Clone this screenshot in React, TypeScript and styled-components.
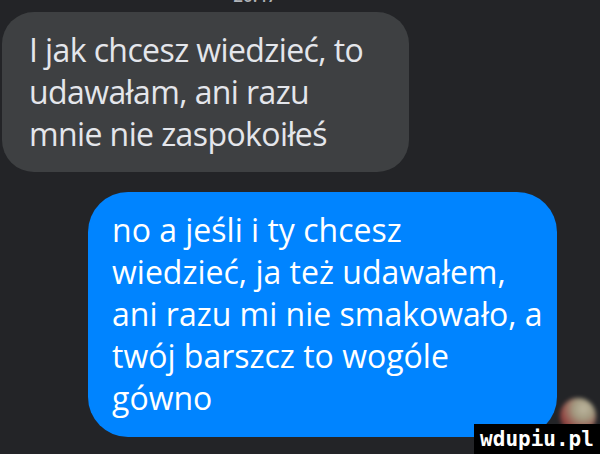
import React from "react";
import styled, { createGlobalStyle } from "styled-components";

const GlobalStyle = createGlobalStyle`
  html, body {
    margin: 0;
    padding: 0;
    background: #232427;
  }
`;

const Screen = styled("div")`
  position: relative;
  width: 600px;
  height: 454px;
  overflow: hidden;
  background: #232427;
  display: flex;
  flex-direction: column;
  font-family: "Open Sans", "Noto Sans", sans-serif;
`;

const Timestamp = styled("div")`
  height: 12px;
  display: flex;
  justify-content: center;
  align-items: flex-end;
  padding-right: 90px;
  color: #b0b3b8;
  font-size: 17px;
  line-height: 16px;
  font-weight: 600;

  span {
    transform: translateY(-8px);
  }
`;

const Bubble = styled("div")<{ $mine?: boolean }>`
  box-sizing: border-box;
  width: ${(p) => (p.$mine ? "469px" : "407px")};
  margin-left: ${(p) => (p.$mine ? "88px" : "2px")};
  margin-top: ${(p) => (p.$mine ? "20px" : "0")};
  padding: ${(p) => (p.$mine ? "17px 16px 18px 24px" : "17px 16px 17px 27px")};
  border-radius: ${(p) => (p.$mine ? "40px" : "32px")};
  background: ${(p) => (p.$mine ? "#0084ff" : "#3e4042")};
  color: ${(p) => (p.$mine ? "#ffffff" : "#e4e6eb")};
  font-size: 32px;
  line-height: 42px;
  letter-spacing: ${(p) => (p.$mine ? "0" : "-0.6px")};
`;

const Line = styled("div")`
  white-space: nowrap;
`;

const Avatar = styled("div")`
  position: absolute;
  left: 560px;
  top: 398px;
  width: 36px;
  height: 36px;
  border-radius: 50%;
  background: radial-gradient(
    circle at 65% 30%,
    #d8d0b4 0%,
    #b9ae90 30%,
    rgba(190, 80, 75, 0.85) 65%,
    #2e2a2a 100%
  );
  filter: blur(2px);
  opacity: 0.85;
`;

const Watermark = styled("div")`
  position: absolute;
  right: 0;
  bottom: 0;
  width: 126px;
  height: 30px;
  background: #000;
  color: #fff;
  display: flex;
  align-items: center;
  justify-content: center;
  font-family: "DejaVu Sans Mono", monospace;
  font-weight: 700;
  font-size: 21px;
`;

const incoming = [
  "I jak chcesz wiedzieć, to",
  "udawałam, ani razu",
  "mnie nie zaspokoiłeś",
];

const outgoing = [
  "no a jeśli i ty chcesz",
  "wiedzieć, ja też udawałem,",
  "ani razu mi nie smakowało, a",
  "twój barszcz to wogóle",
  "gówno",
];

export default function App() {
  return (
    <>
      <GlobalStyle />
      <Screen>
        <Timestamp>
          <span>20:47</span>
        </Timestamp>
        <Bubble>
          {incoming.map((t) => (
            <Line key={t}>{t}</Line>
          ))}
        </Bubble>
        <Bubble $mine>
          {outgoing.map((t) => (
            <Line key={t}>{t}</Line>
          ))}
        </Bubble>
        <Avatar />
        <Watermark>wdupiu.pl</Watermark>
      </Screen>
    </>
  );
}
